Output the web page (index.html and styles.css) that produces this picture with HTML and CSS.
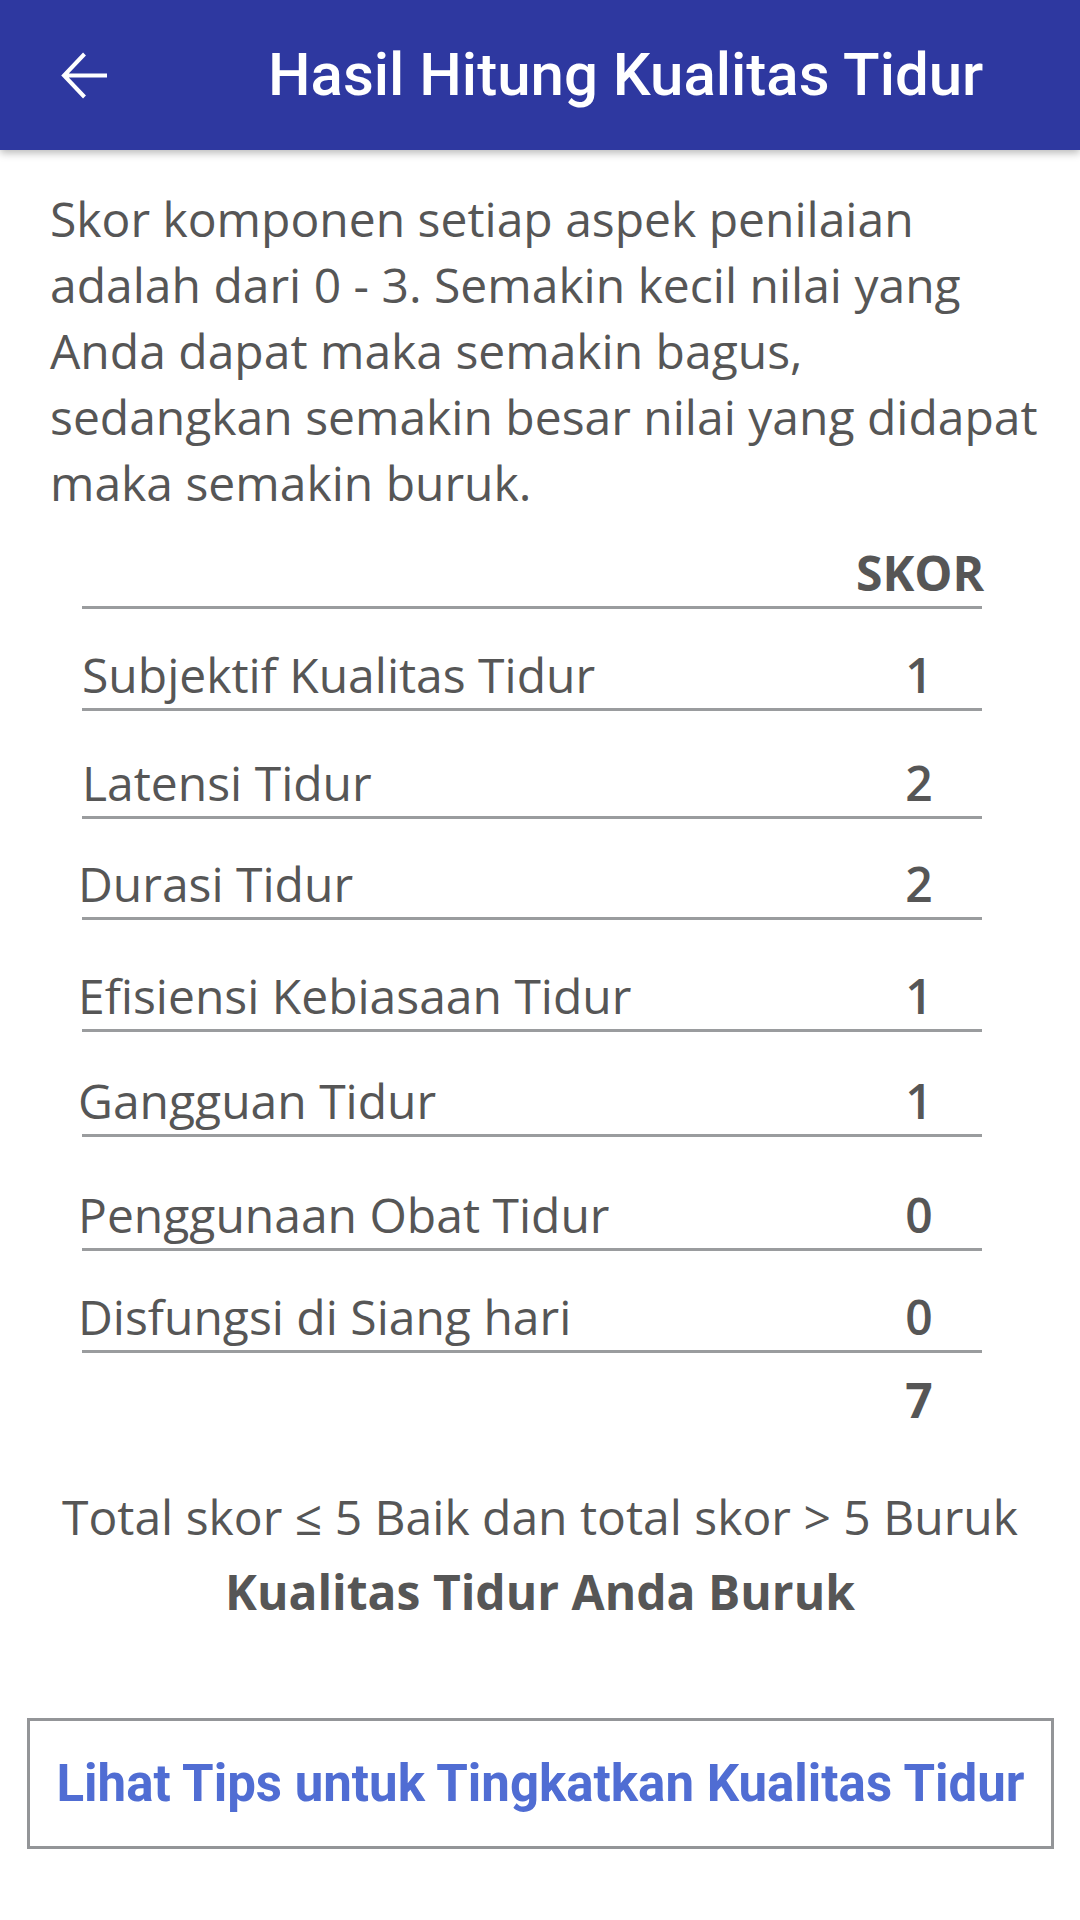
FILE: index.html
```html
<!DOCTYPE html>
<html lang="id">
<head>
<meta charset="utf-8">
<title>Hasil Hitung Kualitas Tidur</title>
<link rel="stylesheet" href="styles.css">
</head>
<body>
<header class="appbar">
  <svg class="back" viewBox="0 0 48 48" width="48" height="48" aria-hidden="true">
    <path d="M46 23.5H4 M23.5 2 L3 23.5 L23.5 45" fill="none" stroke="#fff" stroke-width="4"/>
  </svg>
  <h1 class="title">Hasil Hitung Kualitas Tidur</h1>
</header>
<main class="content">
  <p class="intro">Skor komponen setiap aspek penilaian adalah dari 0 - 3. Semakin kecil nilai yang Anda dapat maka semakin bagus, sedangkan semakin besar nilai yang didapat maka semakin buruk.</p>
  <div class="table">
    <div class="row head"><span class="label"></span><span class="score">SKOR</span></div>
    <div class="row r1"><span class="label">Subjektif Kualitas Tidur</span><span class="score">1</span></div>
    <div class="row r2"><span class="label">Latensi Tidur</span><span class="score">2</span></div>
    <div class="row r3"><span class="label">Durasi Tidur</span><span class="score">2</span></div>
    <div class="row r4"><span class="label">Efisiensi Kebiasaan Tidur</span><span class="score">1</span></div>
    <div class="row r5"><span class="label">Gangguan Tidur</span><span class="score">1</span></div>
    <div class="row r6"><span class="label">Penggunaan Obat Tidur</span><span class="score">0</span></div>
    <div class="row r7"><span class="label">Disfungsi di Siang hari</span><span class="score">0</span></div>
    <div class="row total"><span class="label"></span><span class="score">7</span></div>
  </div>
  <p class="rule">Total skor ≤ 5 Baik dan total skor &gt; 5 Buruk</p>
  <p class="verdict">Kualitas Tidur Anda Buruk</p>
  <button class="tips">Lihat Tips untuk Tingkatkan Kualitas Tidur</button>
</main>
</body>
</html>
```
FILE: styles.css
```css
html, body {
  margin: 0;
  padding: 0;
  background: #ffffff;
}
body {
  width: 1080px;
  height: 1920px;
  font-family: "Open Sans", "Noto Sans", sans-serif;
  color: #565656;
  overflow: hidden;
}
.appbar {
  height: 150px;
  background: #2e38a0;
  display: flex;
  align-items: center;
  box-shadow: 0 3px 8px rgba(0, 0, 0, 0.28);
  position: relative;
  z-index: 1;
}
.back {
  margin-left: 61px;
  margin-top: 2px;
  flex: none;
}
.title {
  margin: 0 0 0 159px;
  font-family: Roboto, "Liberation Sans", sans-serif;
  font-weight: 500;
  font-size: 60px;
  color: #ffffff;
  letter-spacing: 0;
  line-height: 1;
}
.content {
  padding: 0;
}
.intro {
  margin: 36px 0 0 50px;
  width: 1005px;
  font-size: 48px;
  line-height: 66px;
}
.table {
  margin: 0 0 0 82px;
  width: 900px;
}
.row {
  display: grid;
  grid-template-columns: 1fr 126px;
  align-items: end;
  box-sizing: border-box;
  border-bottom: 3px solid #9a9c9e;
  font-size: 48px;
  line-height: 60px;
  padding-bottom: 3px;
}
.score {
  text-align: center;
  font-weight: 600;
}
.head {
  height: 70px;
  margin-top: 23px;
}
.head .score {
  font-weight: 700;
}
.r3 .label,
.r4 .label,
.r5 .label,
.r6 .label,
.r7 .label {
  margin-left: -4px;
}
.r1 { height: 102px; }
.r2 { height: 108px; }
.r3 { height: 101px; }
.r4 { height: 112px; }
.r5 { height: 105px; }
.r6 { height: 114px; }
.r7 { height: 102px; }
.total {
  border-bottom: none;
  height: 80px;
}
.total .score {
  font-weight: 700;
}
.rule {
  margin: 51px 0 0 0;
  text-align: center;
  font-size: 48px;
  line-height: 66px;
}
.verdict {
  margin: 9px 0 0 0;
  text-align: center;
  font-size: 48px;
  line-height: 66px;
  font-weight: 700;
}
.tips {
  display: block;
  margin: 93px 0 0 27px;
  width: 1027px;
  height: 131px;
  box-sizing: border-box;
  border: 3px solid #939598;
  background: #ffffff;
  font-family: Roboto, "Liberation Sans", sans-serif;
  font-weight: 700;
  font-size: 51px;
  color: #506dd3;
  padding: 0;
}
```
